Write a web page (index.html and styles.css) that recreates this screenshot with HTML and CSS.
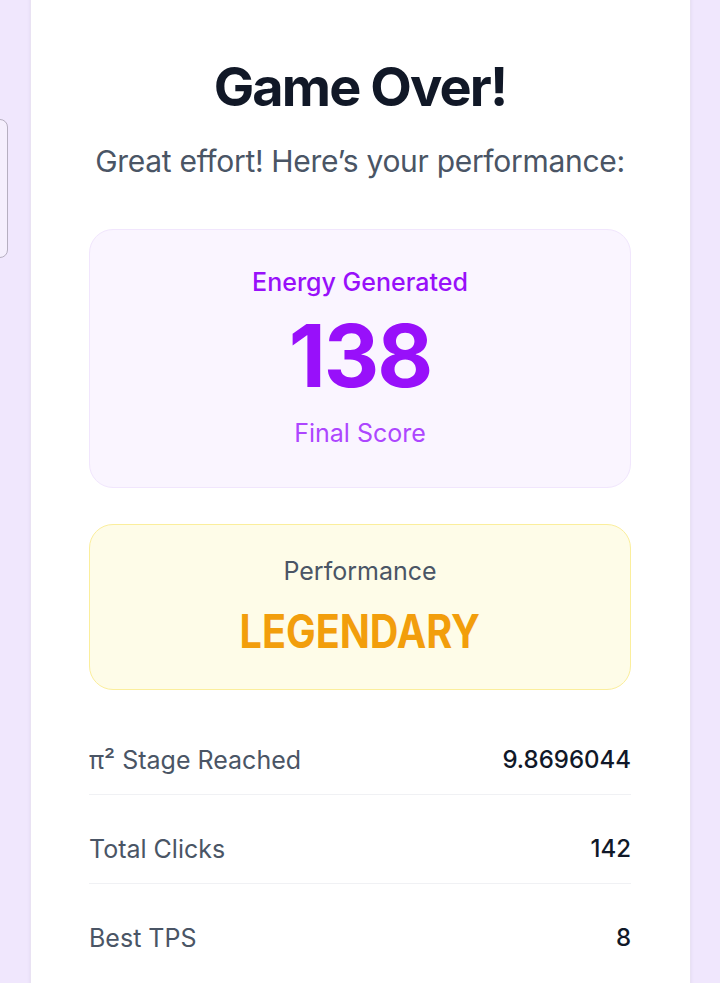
FILE: index.html
```html
<!DOCTYPE html>
<html lang="en">
<head>
<meta charset="utf-8">
<title>Game Over</title>
<link rel="stylesheet" href="styles.css">
</head>
<body>
<div class="side-tab"></div>
<main class="page">
  <section class="card">
    <h1 class="title">Game Over!</h1>
    <p class="subtitle">Great effort! Here’s your performance:</p>

    <div class="score-box">
      <div class="score-label">Energy Generated</div>
      <div class="score-value">138</div>
      <div class="score-caption">Final Score</div>
    </div>

    <div class="rank-box">
      <div class="rank-label">Performance</div>
      <div class="rank-value"><span class="rank-text">LEGENDARY</span></div>
    </div>

    <div class="stats">
      <div class="stat-row">
        <span class="stat-label">π² Stage Reached</span>
        <span class="stat-value">9.8696044</span>
      </div>
      <div class="stat-row">
        <span class="stat-label">Total Clicks</span>
        <span class="stat-value">142</span>
      </div>
      <div class="stat-row last">
        <span class="stat-label">Best TPS</span>
        <span class="stat-value">8</span>
      </div>
    </div>
  </section>
</main>
</body>
</html>
```
FILE: styles.css
```css
* { box-sizing: border-box; }

html, body {
  margin: 0;
  padding: 0;
  height: 983px;
  overflow: hidden;
}

body {
  background: #f0e7fd;
  font-family: Inter, "Noto Sans", "Liberation Sans", sans-serif;
  color: #101828;
  position: relative;
}

.side-tab {
  position: absolute;
  left: -30px;
  top: 119px;
  width: 38px;
  height: 139px;
  border: 1.5px solid #b6afc0;
  border-radius: 8px;
  background: #f5effd;
}

.page {
  padding: 0 29px 0 30px;
}

.card {
  margin-top: -40px;
  background: #ffffff;
  border: 1px solid #e9e2f3;
  box-shadow: 0 0 3px rgba(120, 100, 150, 0.12);
  padding: 96px 59px 40px 58px;
  min-height: 1100px;
}

.title {
  margin: 0;
  text-align: center;
  font-size: 54px;
  line-height: 60px;
  font-weight: 700;
  color: #111827;
  letter-spacing: -1.9px;
}

.subtitle {
  margin: 24px 0 0;
  text-align: center;
  font-size: 30px;
  line-height: 40px;
  color: #4a5565;
  letter-spacing: -0.3px;
}

.score-box {
  margin-top: 48px;
  background: #faf5ff;
  border: 1px solid #f1e6fd;
  border-radius: 24px;
  padding: 36px 20px 38px;
  text-align: center;
}

.score-label {
  font-size: 25px;
  line-height: 32px;
  font-weight: 500;
  color: #9810fa;
}

.score-value {
  margin-top: 15px;
  font-size: 86px;
  line-height: 86px;
  font-weight: 700;
  color: #9810fa;
  letter-spacing: -2px;
}

.score-caption {
  margin-top: 18px;
  font-size: 25px;
  line-height: 32px;
  color: #ad46ff;
}

.rank-box {
  margin-top: 36px;
  background: #fefce8;
  border: 1px solid #fbee9c;
  border-radius: 24px;
  padding: 30px 20px 30px;
  text-align: center;
}

.rank-label {
  font-size: 25px;
  line-height: 32px;
  color: #4a5565;
}

.rank-value {
  margin-top: 16px;
  font-size: 46px;
  line-height: 56px;
  font-weight: 700;
  color: #f29e0c;
}

.rank-text {
  display: inline-block;
  transform: scaleX(0.86);
}

.stats {
  margin-top: 36px;
}

.stat-row {
  display: flex;
  justify-content: space-between;
  align-items: center;
  padding: 16px 0;
  margin-top: 20px;
  border-bottom: 1px solid #f0f1f4;
  font-size: 25px;
  line-height: 36px;
}

.stat-row.last { border-bottom: none; }

.stat-label {
  color: #4a5565;
}

.stat-value {
  color: #101828;
  font-weight: 500;
  font-size: 24px;
}
```
